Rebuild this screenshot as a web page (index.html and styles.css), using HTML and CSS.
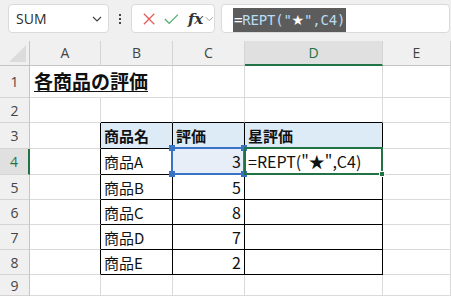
FILE: index.html
```html
<!DOCTYPE html>
<html lang="ja">
<head>
  <meta charset="UTF-8" />
  <title>各商品の評価</title>
  <link rel="stylesheet" href="styles.css">
</head>
<body>
  <div class="toolbar">
    <div class="namebox">
      <span>SUM</span>
      <svg width="10" height="6" viewBox="0 0 10 6"><path d="M1 1l4 4 4-4" fill="none" stroke="#444" stroke-width="1.2"/></svg>
    </div>
    <div class="dots"><i></i><i></i><i></i></div>
    <div class="fbtns">
      <svg width="14" height="14" viewBox="0 0 14 14"><path d="M1 1l12 12M13 1L1 13" stroke="#e05a5a" stroke-width="1.4"/></svg>
      <svg width="17" height="12" viewBox="0 0 17 12"><path d="M1 6l5 5L16 1" fill="none" stroke="#4caf6a" stroke-width="1.4"/></svg>
      <span class="fx">fx</span>
      <svg width="10" height="6" viewBox="0 0 10 6"><path d="M1 1l4 4 4-4" fill="none" stroke="#999" stroke-width="1.1"/></svg>
    </div>
    <div class="fbar"><span class="fsel"><b>=</b>REPT("<b class="star">★</b>",C4)</span></div>
  </div>

  <div class="sheet">
    <!-- header -->
    <div class="corner"><i></i></div>
    <div class="ch">A</div>
    <div class="ch">B</div>
    <div class="ch">C</div>
    <div class="ch on">D</div>
    <div class="ch">E</div>
    <!-- 1 -->
    <div class="rh">1</div>
    <div class="c title"><span>各商品の評価</span></div>
    <div class="c"></div>
    <div class="c"></div>
    <div class="c"></div>
    <div class="c"></div>
    <!-- 2 -->
    <div class="rh">2</div>
    <div class="c"></div>
    <div class="c tt"></div>
    <div class="c tt"></div>
    <div class="c tt"></div>
    <div class="c"></div>
    <!-- 3 -->
    <div class="rh">3</div>
    <div class="c tl"></div>
    <div class="c t hd">商品名</div>
    <div class="c t hd">評価</div>
    <div class="c t hd">星評価</div>
    <div class="c"></div>
    <!-- 4 -->
    <div class="rh on">4</div>
    <div class="c tl"></div>
    <div class="c t">商品A</div>
    <div class="c t num ref">3<span class="sel"><i class="h1"></i><i class="h2"></i><i class="h3"></i><i class="h4"></i></span></div>
    <div class="c t active">=REPT("<b>★</b>",C4)<span class="act"><i></i></span></div>
    <div class="c"></div>
    <!-- 5 -->
    <div class="rh">5</div>
    <div class="c tl"></div>
    <div class="c t">商品B</div>
    <div class="c t num">5</div>
    <div class="c t"></div>
    <div class="c"></div>
    <!-- 6 -->
    <div class="rh">6</div>
    <div class="c tl"></div>
    <div class="c t">商品C</div>
    <div class="c t num">8</div>
    <div class="c t"></div>
    <div class="c"></div>
    <!-- 7 -->
    <div class="rh">7</div>
    <div class="c tl"></div>
    <div class="c t">商品D</div>
    <div class="c t num">7</div>
    <div class="c t"></div>
    <div class="c"></div>
    <!-- 8 -->
    <div class="rh">8</div>
    <div class="c tl"></div>
    <div class="c t">商品E</div>
    <div class="c t num">2</div>
    <div class="c t"></div>
    <div class="c"></div>
    <!-- 9 -->
    <div class="rh">9</div>
    <div class="c"></div>
    <div class="c"></div>
    <div class="c"></div>
    <div class="c"></div>
    <div class="c"></div>
  </div>
</body>
</html>
```

FILE: styles.css
```css
* {
  box-sizing: border-box;
}
body {
  margin: 0;
  width: 451px;
  height: 296px;
  overflow: hidden;
  background: #fff;
  font-family: "Noto Sans CJK JP", "Noto Sans", sans-serif;
}
.toolbar {
  height: 41px;
  background: #f0f0f0;
  display: flex;
  align-items: flex-start;
  padding: 4px 0 0 8px;
}
.namebox {
  width: 101px;
  height: 29px;
  background: #fff;
  border: 1px solid #dadada;
  border-radius: 4px;
  display: flex;
  align-items: center;
  justify-content: space-between;
  padding: 0 6px 0 7px;
  font-family: "Open Sans", sans-serif;
  font-size: 14px;
  color: #2b2b2b;
}
.dots {
  width: 22px;
  height: 29px;
  display: flex;
  flex-direction: column;
  align-items: center;
  justify-content: center;
  gap: 2px;
}
.dots i {
  width: 2px;
  height: 2px;
  background: #444;
}
.fbtns {
  width: 84px;
  height: 29px;
  background: #fff;
  border: 1px solid #dadada;
  border-radius: 4px;
  display: flex;
  align-items: center;
  padding: 0 0 0 11px;
  gap: 9px;
}
.fbtns .fx {
  font-family: "DejaVu Serif", serif;
  font-style: italic;
  font-weight: bold;
  font-size: 15px;
  color: #333;
  margin-right: -7px;
}
.fbar {
  flex: 1;
  height: 29px;
  margin-left: 6px;
  margin-right: 1px;
  background: #fff;
  border: 1px solid #dadada;
  border-radius: 4px;
  padding: 1px 0 0 11px;
}
.fsel {
  display: inline-block;
  height: 24px;
  line-height: 24px;
  padding: 0 1px;
  background: #5c5c5c;
  color: #b9dcf5;
  font-family: "DejaVu Sans Mono", monospace;
  font-size: 14px;
  letter-spacing: -0.2px;
}
.fsel b {
  color: #fff;
  font-weight: normal;
}
.fsel .star {
  font-family: "DejaVu Sans", sans-serif;
  font-size: 14px;
}
.sheet {
  display: grid;
  grid-template-columns: 30px 71px 72px 72px 138px 1fr;
  grid-template-rows: 25px 32px 25px 26px 26px 25px 25px 25px 25px 1fr;
  height: 255px;
}
.corner {
  background: #f0f0f0;
  border-right: 1px solid #c4c4c4;
  border-bottom: 1px solid #c4c4c4;
  display: flex;
  align-items: flex-end;
  justify-content: flex-end;
  padding: 0 3px 3px 0;
}
.corner i {
  width: 0;
  height: 0;
  border-left: 17px solid transparent;
  border-bottom: 17px solid #dcdcdc;
}
.ch {
  background: #f0f0f0;
  border-right: 1px solid #d4d4d4;
  border-bottom: 1px solid #c4c4c4;
  text-align: center;
  line-height: 24px;
  font-family: "Open Sans", sans-serif;
  font-size: 14px;
  color: #444;
}
.ch.on {
  background: #e0e0e0;
  color: #217346;
  border-bottom: 2px solid #217346;
}
.rh {
  background: #f0f0f0;
  border-right: 1px solid #c4c4c4;
  border-bottom: 1px solid #d4d4d4;
  display: flex;
  align-items: center;
  justify-content: center;
  font-family: "Open Sans", sans-serif;
  font-size: 14px;
  color: #444;
}
.rh.on {
  background: #e0e0e0;
  color: #217346;
  border-right: 2px solid #217346;
}
.c {
  border-right: 1px solid #dadada;
  border-bottom: 1px solid #dadada;
  font-size: 15px;
  line-height: 25px;
  padding: 0 3px;
  white-space: nowrap;
  color: #111;
}
.title {
  border-right: none;
  font-size: 19px;
  font-weight: bold;
  line-height: 30px;
  padding-left: 4px;
}
.title span {
  text-decoration: underline;
  text-underline-offset: 2px;
}
.tt {
  border-bottom-color: #000;
}
.tl {
  border-right-color: #000;
}
.t {
  border-right-color: #000;
  border-bottom-color: #000;
}
.hd {
  background: #ddebf7;
  font-weight: bold;
}
.num {
  text-align: right;
  font-size: 16px;
}
.ref {
  position: relative;
  background: #e8eef8;
}
.sel {
  position: absolute;
  left: -2px;
  top: -2px;
  right: -1px;
  bottom: -1px;
  border: 2px solid #3a72c5;
}
.sel i {
  position: absolute;
  width: 6px;
  height: 6px;
  background: #3a72c5;
}
.sel .h1 { left: -4px; top: -4px; }
.sel .h2 { right: -4px; top: -4px; }
.sel .h3 { left: -4px; bottom: -4px; }
.sel .h4 { right: -4px; bottom: -4px; }
.active {
  position: relative;
  font-size: 16px;
}
.active b {
  font-weight: normal;
}
.act {
  position: absolute;
  left: -1px;
  top: -2px;
  right: -1px;
  bottom: -1px;
  border: 2px solid #217346;
}
.act i {
  position: absolute;
  right: -4px;
  bottom: -4px;
  width: 6px;
  height: 6px;
  background: #217346;
  border: 1px solid #fff;
}
```
